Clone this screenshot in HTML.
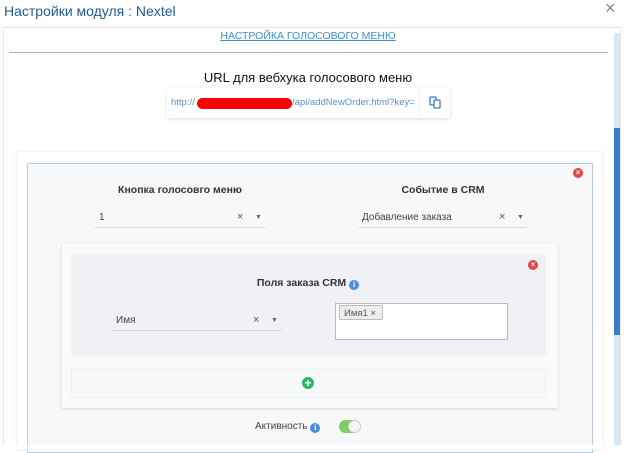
<!DOCTYPE html>
<html><head><meta charset="utf-8"><style>
*{box-sizing:border-box;margin:0;padding:0}
body{width:624px;height:449px;background:#fff;font-family:"Liberation Sans",sans-serif;position:relative;overflow:hidden}
.a{position:absolute}
.t{white-space:nowrap}
.sel{position:absolute;border-bottom:1px solid #d8d8d8;height:20px;font-size:10px;color:#444}
.sel span{position:absolute;top:4px}
.x{font-size:11px;color:#555}
.arr{font-size:7px;color:#666}
.rx{width:10px;height:10px;border-radius:50%;background:#e64545;color:#fff;font-size:8px;line-height:10px;text-align:center;font-weight:bold}
.info{display:inline-block;width:10px;height:10px;border-radius:50%;background:#4a8de0;color:#fff;font-size:8px;line-height:10px;text-align:center;font-weight:bold;font-family:"Liberation Serif",serif;vertical-align:-1px}
</style></head><body>
<div class="a t" style="left:4px;top:3px;font-size:14px;color:#1f5a96">Настройки модуля : Nextel</div>
<div class="a" style="left:605px;top:-2px;font-size:18px;color:#888">×</div>
<div class="a" style="left:3px;top:27px;width:618px;height:418px;border:1px solid #e6e6e6;border-bottom:none"></div>
<div class="a" style="left:614px;top:33px;width:6px;height:412px;background:#dce7f3"></div>
<div class="a" style="left:614px;top:128px;width:6px;height:207px;background:#3a7bc8"></div>
<div class="a t" style="left:0;width:616px;top:30px;text-align:center;font-size:10.5px;color:#3a8fd0;text-decoration:underline">НАСТРОЙКА ГОЛОСОВОГО МЕНЮ</div>
<div class="a" style="left:9px;top:52px;width:599px;height:1px;background:#9fb0d2"></div>
<div class="a t" style="left:0;width:616px;top:70px;text-align:center;font-size:13px;color:#111">URL для вебхука голосового меню</div>
<div class="a" style="left:167px;top:88px;width:283px;height:30px;background:#fff;box-shadow:0 1px 3px rgba(0,0,0,.15)"></div>
<div class="a t" style="left:171px;top:97px;font-size:9.5px;color:#5b8fd6">http://</div>
<div class="a t" style="left:292px;top:97px;font-size:9.5px;color:#5b8fd6">/api/addNewOrder.html?key=</div>
<div class="a" style="left:197px;top:98px;width:95px;height:11px;border-radius:6px;background:#f00"></div>
<div class="a" style="left:419px;top:88px;width:1px;height:30px;background:#eee"></div>
<svg class="a" style="left:429px;top:96px" width="12" height="13" viewBox="0 0 12 13"><rect x="1" y="1" width="6" height="8" rx="1" fill="none" stroke="#3a7bc8" stroke-width="1.3"/><rect x="5" y="4" width="6" height="8" rx="1" fill="#fff" stroke="#3a7bc8" stroke-width="1.3"/></svg>
<div class="a" style="left:17px;top:152px;width:585px;height:297px;background:#fff;box-shadow:0 0 3px rgba(0,0,0,.12)"></div>
<div class="a" style="left:27px;top:163px;width:566px;height:290px;background:#f7f8fa;border:1px solid #b8cce8"></div>
<div class="a" style="left:0;top:445px;width:624px;height:4px;background:#fff"></div>
<div class="a rx" style="left:573px;top:168px">×</div>
<div class="a t" style="left:95px;width:170px;top:184px;text-align:center;font-size:10.5px;font-weight:bold;color:#333">Кнопка голосовго меню</div>
<div class="a t" style="left:359px;width:168px;top:184px;text-align:center;font-size:10.5px;font-weight:bold;color:#333">Событие в CRM</div>
<div class="sel" style="left:95px;top:208px;width:170px"><span style="left:4px">1</span><span class="x" style="left:142px;top:3px">×</span><span class="arr" style="left:160px;top:6px">▼</span></div>
<div class="sel" style="left:359px;top:208px;width:168px"><span style="left:3px">Добавление заказа</span><span class="x" style="left:140px;top:3px">×</span><span class="arr" style="left:158px;top:6px">▼</span></div>
<div class="a" style="left:62px;top:244px;width:496px;height:164px;background:#f9fafb;box-shadow:0 1px 3px rgba(0,0,0,.15)"></div>
<div class="a" style="left:72px;top:255px;width:473px;height:100px;background:#eff1f5;box-shadow:0 0 2px rgba(0,0,0,.08)"></div>
<div class="a rx" style="left:528px;top:260px">×</div>
<div class="a t" style="left:0;width:616px;top:277px;text-align:center;font-size:10.5px;font-weight:bold;color:#333">Поля заказа CRM <span class="info">i</span></div>
<div class="sel" style="left:111px;top:311px;width:171px"><span style="left:5px">Имя</span><span class="x" style="left:142px;top:3px">×</span><span class="arr" style="left:160px;top:6px">▼</span></div>
<div class="a" style="left:335px;top:303px;width:173px;height:37px;background:#fff;border:1px solid #bbb"></div>
<div class="a t" style="left:339px;top:305px;width:44px;height:15px;background:#eee;border:1px solid #bbb;border-radius:2px;font-size:9.5px;color:#555;padding:2px 0 0 4px">Имя1 ×</div>
<div class="a" style="left:72px;top:369px;width:473px;height:28px;background:#f8f9fb;box-shadow:0 0 2px rgba(0,0,0,.1)"></div>
<div class="a" style="left:302px;top:377px;width:12px;height:12px;border-radius:50%;background:#2eb56a;color:#fff;font-size:12px;line-height:12px;text-align:center;font-weight:bold">+</div>
<div class="a t" style="left:255px;top:421px;font-size:10px;color:#444">Активность <span class="info">i</span></div>
<div class="a" style="left:339px;top:420px;width:21px;height:13px;border-radius:7px;background:#7ccf62"></div>
<div class="a" style="left:348px;top:420px;width:13px;height:13px;border-radius:50%;background:#f4f4f4;border:1px solid #ccc"></div>
</body></html>
